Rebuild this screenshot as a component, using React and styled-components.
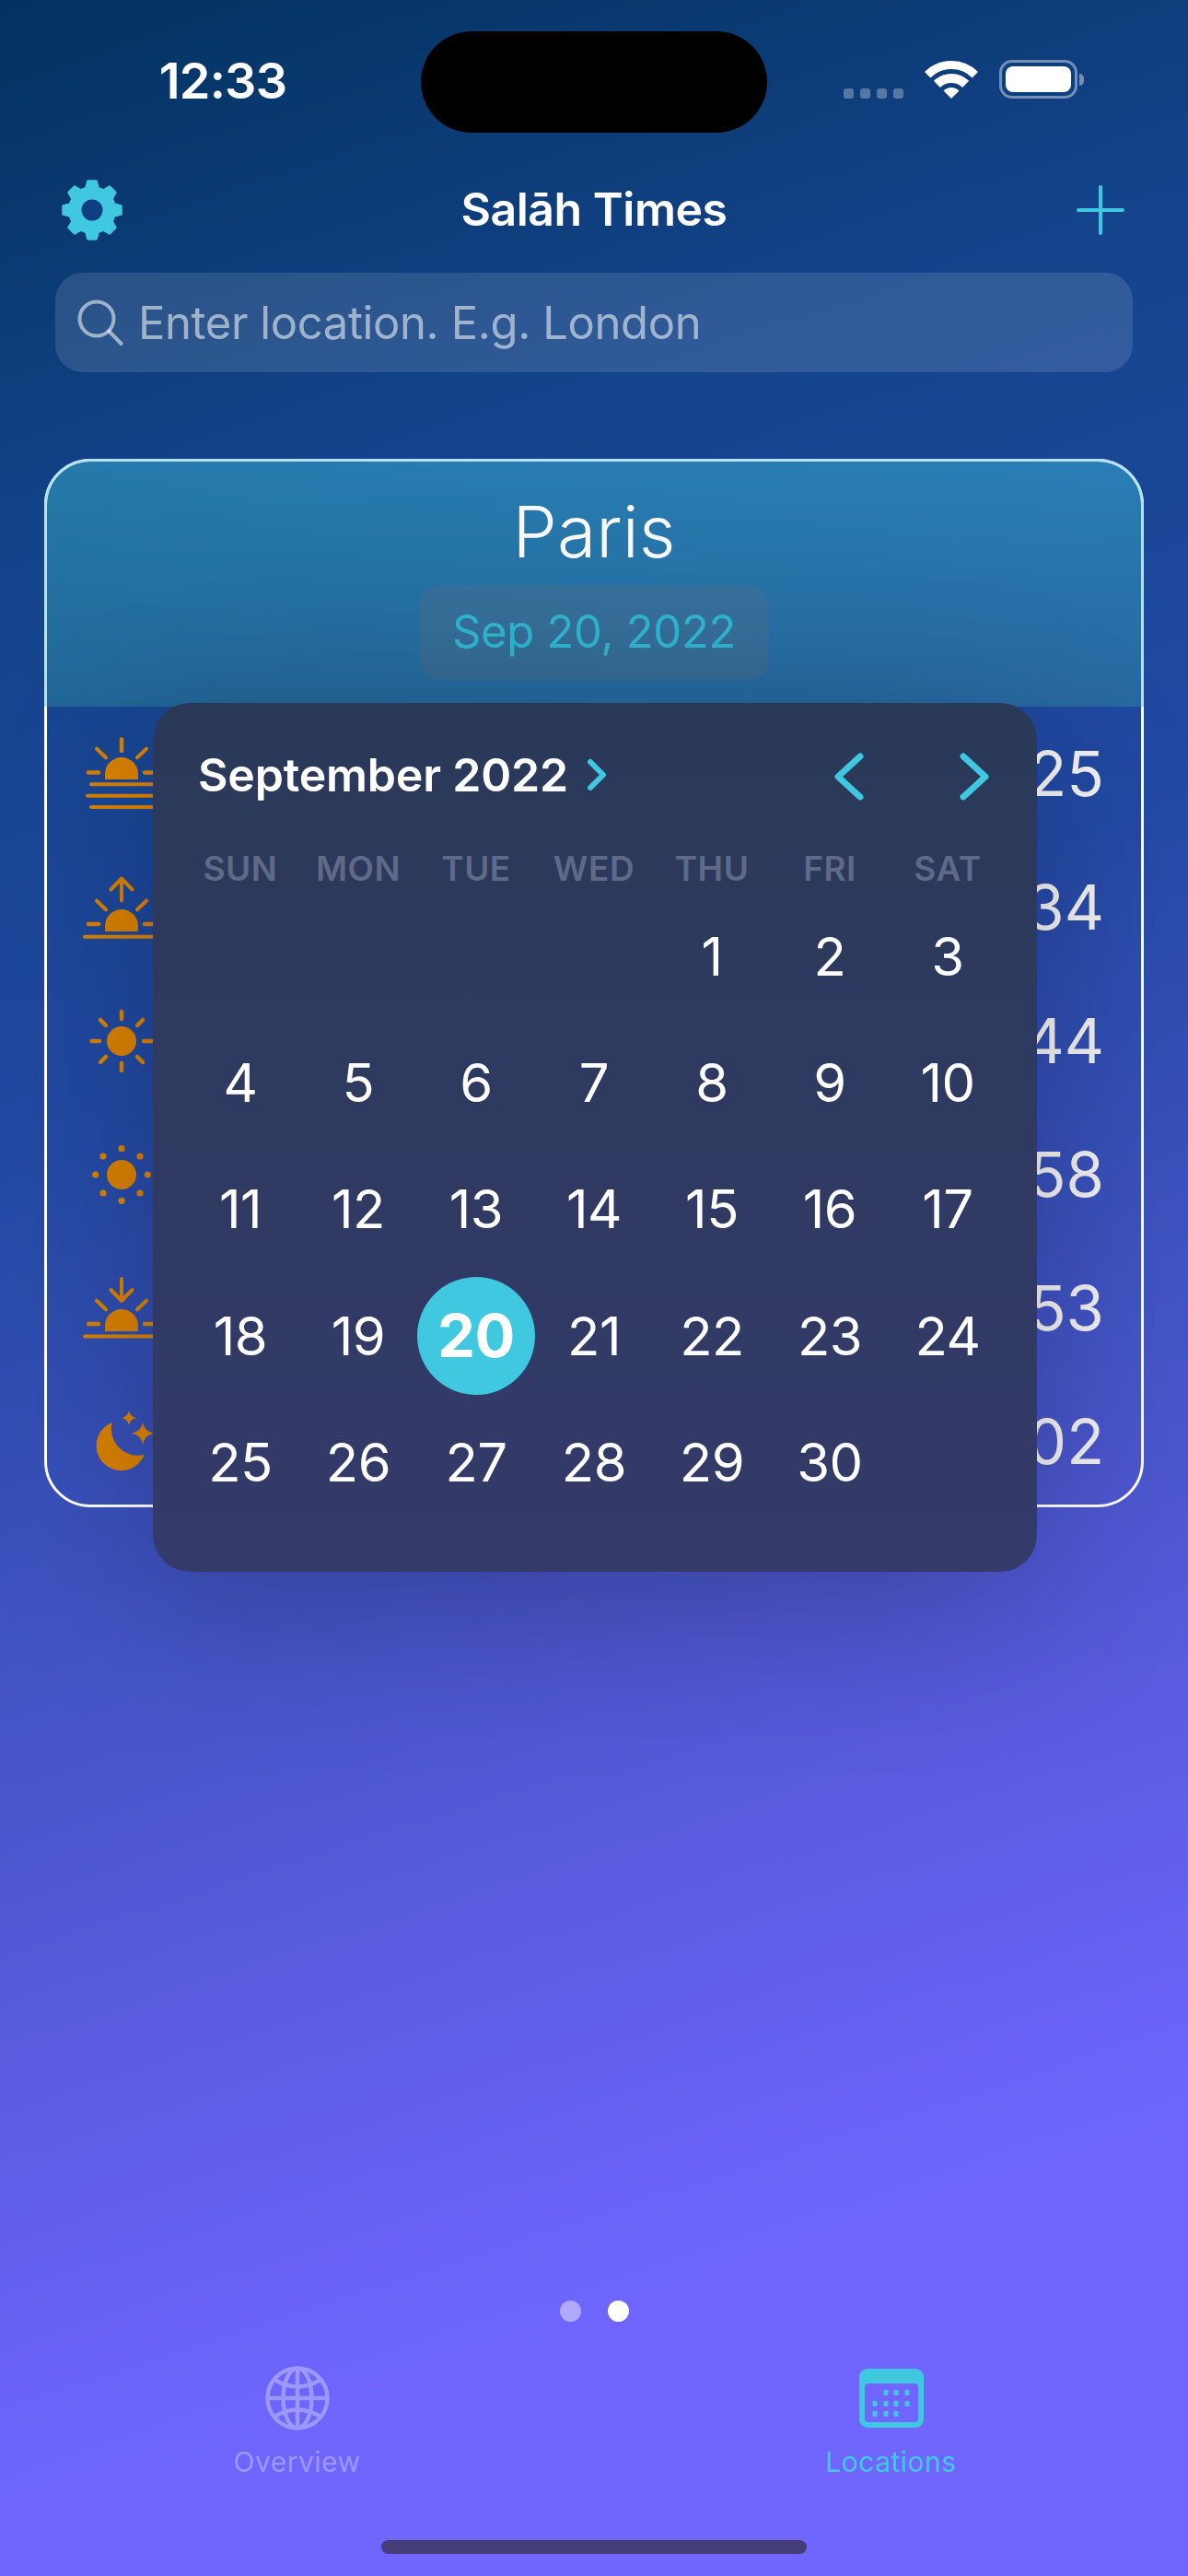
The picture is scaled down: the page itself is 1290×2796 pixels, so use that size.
import React from 'react';
import styled, { createGlobalStyle } from 'styled-components';


// data
const WEEKDAYS = ['SUN', 'MON', 'TUE', 'WED', 'THU', 'FRI', 'SAT'];
const LEADING_BLANKS = 4;
const DAYS_IN_MONTH = 30;
const SELECTED_DAY = 20;
const ORANGE = '#d98200';
const TEAL = '#40c8e0';


// styled-components
const GlobalStyle = createGlobalStyle`
  html, body {
    margin: 0;
    padding: 0;
    background: #14438b;
  }
`

const Page = styled.div`
  width: 1290px;
  height: 2796px;
  overflow: hidden;
  display: flex;
  flex-direction: column;
  font-family: Inter, "Liberation Sans", sans-serif;
  color: #fff;
  background: linear-gradient(162deg, #03325f 0%, #14448c 20%, #2249a3 39%, #4a56cc 61%, #6b63f8 81%, #7066ff 87%);
`

const StatusBar = styled.div`
  height: 110px;
  padding-top: 34px;
  display: grid;
  grid-template-columns: 457px 376px 1fr;
`

const Clock = styled.div`
  align-self: center;
  text-align: center;
  width: 484px;
  font-size: 54px;
  font-weight: 600;
  letter-spacing: -0.8px;
  margin-top: -4px;
`

const Island = styled.div`
  background: #000;
  border-radius: 55px;
`

const StatusIcons = styled.div`
  display: flex;
  align-items: flex-end;
  height: 73px;
  padding-left: 83px;
`

const CellDots = styled.div`
  display: flex;
  gap: 7px;
  margin-right: 23px;
`

const CellDot = styled.span`
  width: 11px;
  height: 11px;
  border-radius: 3px;
  background: rgba(255, 255, 255, 0.3);
`

const Battery = styled.div`
  display: flex;
  align-items: center;
  margin-left: 23px;
  gap: 2px;
`

const BatteryShell = styled.div`
  box-sizing: border-box;
  width: 85px;
  height: 42px;
  padding: 4px;
  border: 3px solid rgba(255, 255, 255, 0.42);
  border-radius: 14px;
`

const BatteryLevel = styled.div`
  height: 100%;
  background: #fff;
  border-radius: 8px;
`

const BatteryNub = styled.div`
  width: 5px;
  height: 13px;
  background: rgba(255, 255, 255, 0.42);
  border-radius: 0 5px 5px 0;
`

const NavRow = styled.div`
  margin-top: 28px;
  height: 112px;
  padding: 0 69px;
  display: grid;
  grid-template-columns: 1fr auto 1fr;
  align-items: center;
  > :last-child {
    justify-self: end;
  }
`

const Title = styled.div`
  font-size: 50px;
  font-weight: 600;
  letter-spacing: -0.5px;
  margin-top: -3px;
`

const SearchBox = styled.div`
  box-sizing: border-box;
  margin: 12px 60px 0 60px;
  height: 108px;
  padding-left: 24px;
  display: flex;
  align-items: center;
  gap: 16px;
  border-radius: 30px;
  background: rgba(255, 255, 255, 0.12);
`

const Placeholder = styled.span`
  font-size: 49px;
  letter-spacing: -0.4px;
  color: rgba(255, 255, 255, 0.55);
`

const Card = styled.div`
  box-sizing: border-box;
  position: relative;
  margin: 94px 48px 0;
  height: 1138px;
  border: 3px solid #fff;
  border-radius: 50px;
`

const CardHeader = styled.div`
  box-sizing: border-box;
  margin: -3px -3px 0;
  height: 269px;
  padding-top: 31px;
  display: flex;
  flex-direction: column;
  align-items: center;
  border: 3px solid #b5e2ee;
  border-bottom: 0;
  border-radius: 50px 50px 0 0;
  background: linear-gradient(180deg, rgba(63, 198, 222, 0.43), rgba(60, 190, 165, 0.27));
  background-clip: padding-box;
`

const CityName = styled.div`
  font-size: 77px;
  line-height: 90px;
  font-weight: 300;
  color: #f6f8fa;
`

const DatePill = styled.div`
  box-sizing: border-box;
  margin-top: 13px;
  padding-bottom: 3px;
  width: 379px;
  height: 103px;
  display: flex;
  align-items: center;
  justify-content: center;
  border-radius: 22px;
  font-size: 49px;
  font-weight: 400;
  letter-spacing: -0.3px;
  color: #2fb4cf;
  background: rgba(120, 110, 110, 0.2);
`

const PrayerList = styled.div`
  display: grid;
  grid-auto-rows: 145px;
`

const PrayerRow = styled.div`
  display: flex;
  align-items: center;
  justify-content: space-between;
  padding: 0 40px 0 39px;
`

const PrayerTime = styled.span`
  font-size: 67px;
  font-weight: 400;
  color: #f2f2f4;
`

const Calendar = styled.div`
  box-sizing: border-box;
  position: absolute;
  left: 115px;
  top: 262px;
  width: 960px;
  height: 943px;
  padding: 48px 31px 0;
  border-radius: 40px;
  background: linear-gradient(180deg, #2a3958, #343a6a);
  box-shadow: 0 40px 180px rgba(0, 0, 0, 0.22);
`

const MonthRow = styled.div`
  height: 60px;
  padding: 0 21px 0 18px;
  display: flex;
  align-items: center;
  justify-content: space-between;
`

const MonthLabel = styled.div`
  display: flex;
  align-items: center;
  gap: 20px;
  font-size: 50px;
  font-weight: 600;
  letter-spacing: -0.2px;
`

const MonthArrows = styled.div`
  display: flex;
  gap: 104px;
  margin-top: 4px;
`

const WeekRow = styled.div`
  margin-top: 48px;
  display: grid;
  grid-template-columns: repeat(7, 128px);
  height: 46px;
`

const WeekDay = styled.div`
  display: flex;
  align-items: center;
  justify-content: center;
  font-size: 37px;
  font-weight: 600;
  letter-spacing: 0.5px;
  color: #5e6a87;
`

const DayGrid = styled.div`
  margin-top: 4px;
  display: grid;
  grid-template-columns: repeat(7, 128px);
  grid-auto-rows: 137.4px;
`

const DayCell = styled.div`
  display: flex;
  align-items: center;
  justify-content: center;
  font-size: ${p => (p.$selected ? '65px' : '58px')};
  font-weight: ${p => (p.$selected ? 700 : 400)};
  letter-spacing: -0.5px;
`

const DayCircle = styled.div`
  width: 128px;
  height: 128px;
  border-radius: 50%;
  display: flex;
  align-items: center;
  justify-content: center;
  background: ${TEAL};
`

const Pager = styled.div`
  margin-top: 861px;
  display: flex;
  justify-content: center;
  gap: 29px;
`

const PagerDot = styled.span`
  width: 23px;
  height: 23px;
  border-radius: 50%;
  background: ${p => (p.$active ? '#fff' : 'rgba(255, 255, 255, 0.45)')};
`

const TabBar = styled.div`
  margin-top: 48px;
  display: grid;
  grid-template-columns: 1fr 1fr;
`

const Tab = styled.div`
  display: flex;
  flex-direction: column;
  align-items: center;
  gap: 16px;
  color: ${p => (p.$active ? TEAL : '#9d98ff')};
`

const TabIcon = styled.div`
  height: 70px;
  display: flex;
  align-items: center;
`

const TabLabel = styled.div`
  font-size: 30px;
  line-height: 36px;
  letter-spacing: 0.5px;
`

const HomeIndicator = styled.div`
  margin: 67px auto 0;
  width: 462px;
  height: 15px;
  border-radius: 8px;
  background: rgba(32, 27, 10, 0.55);
`


// icons
const gearPath = () => {
  const point = (r, deg) => {
    const a = (deg - 90) * Math.PI / 180;
    return `${(35 + r * Math.cos(a)).toFixed(2)} ${(35 + r * Math.sin(a)).toFixed(2)}`;
  };
  let d = '';
  for (let i = 0; i < 8; i++) {
    const c = i * 45;
    d += `${i ? 'L' : 'M'}${point(24.5, c - 22.5)} L${point(24.5, c - 15)} L${point(31.5, c - 8)} L${point(31.5, c + 8)} L${point(24.5, c + 15)} `;
  }
  return d + 'Z';
};

const GearIcon = () => (
  <svg width="70" height="70" viewBox="0 0 70 70" style={{ marginLeft: '-4px' }}>
    <path d={gearPath()} fill={TEAL} stroke={TEAL} strokeWidth="3" strokeLinejoin="round" />
    <circle cx="35" cy="35" r="11.5" fill="#0f3f80" />
  </svg>
);

const PlusIcon = () => (
  <svg width="52" height="54" viewBox="0 0 52 54" fill="none" stroke={TEAL} strokeWidth="4" strokeLinecap="round">
    <path d="M26 2V52M2 27H50" />
  </svg>
);

const SearchIcon = () => (
  <svg width="50" height="50" viewBox="0 0 50 50" fill="none" stroke="rgba(255,255,255,0.55)" strokeWidth="4" strokeLinecap="round">
    <circle cx="21" cy="21" r="18.5" />
    <path d="M34.5 34.5L47.5 48" />
  </svg>
);

const WifiIcon = () => (
  <svg width="58" height="42" viewBox="0 0 58 42" fill="#fff">
    <path d="M3.2 16.2A36.5 36.5 0 0 1 54.8 16.2" fill="none" stroke="#fff" strokeWidth="9" />
    <path d="M13.4 26.4A22 22 0 0 1 44.6 26.4" fill="none" stroke="#fff" strokeWidth="10" />
    <path d="M29 42L20.5 33.5A12 12 0 0 1 37.5 33.5Z" />
  </svg>
);

const ChevronIcon = ({ width, height, strokeWidth, left }) => (
  <svg width={width} height={height} viewBox={`0 0 ${width} ${height}`} fill="none" stroke={TEAL} strokeWidth={strokeWidth} strokeLinecap="round" strokeLinejoin="round">
    {left
      ? <path d={`M${width - 4} 4L4 ${height / 2}L${width - 4} ${height - 4}`} />
      : <path d={`M4 4L${width - 4} ${height / 2}L4 ${height - 4}`} />}
  </svg>
);

const SideRays = () => (
  <path d="M15 14.7L25 24.3M69 14.7L59 24.3" />
);

const SunriseLines = () => (
  <svg width="84" height="84" viewBox="0 0 84 84" fill="none" stroke={ORANGE} strokeWidth="4" strokeLinecap="round">
    <path d="M42 4.5V17" strokeWidth="4.5" />
    <SideRays />
    <path d="M6 40.5H17M67 40.5H78" strokeWidth="4.5" />
    <path d="M24 48V42A18 18 0 0 1 60 42V48Z" fill={ORANGE} stroke="none" />
    <path d="M9 53.2H84M5 65.7H75M9 78H84" />
  </svg>
);

const ArrowSun = ({ down }) => (
  <svg width="84" height="72" viewBox="0 0 84 72" fill="none" stroke={ORANGE} strokeWidth="4" strokeLinecap="round" strokeLinejoin="round">
    {down
      ? <path d="M42 4V28M30.5 16L42 28L53.5 16" />
      : <path d="M42 28.5V4.5M30.5 16.5L42 4.5L53.5 16.5" />}
    <g transform={`translate(0 ${down ? 13 : 14})`}>
      <SideRays />
    </g>
    <path d={down ? 'M6 53H17M67 53H78' : 'M6 54H17M67 54H78'} strokeWidth="4.5" />
    <path d={down ? 'M24 61V55A18 18 0 0 1 60 55V61Z' : 'M24 62V56A18 18 0 0 1 60 56V62Z'} fill={ORANGE} stroke="none" />
    <path d={down ? 'M2 66.5H84' : 'M2 67.7H84'} />
  </svg>
);

const SunRays = () => (
  <svg width="84" height="84" viewBox="0 0 84 84" fill="none" stroke={ORANGE} strokeWidth="4.5" strokeLinecap="round">
    <circle cx="42" cy="42" r="16" fill={ORANGE} stroke="none" />
    <path d="M42 10V18M42 66V74M9.5 42H18M66 42H76" />
    <path d="M19 19L25 25M59 25L65 19M19 65L25 59M59 59L65 65" />
  </svg>
);

const SunDots = () => (
  <svg width="84" height="72" viewBox="0 0 84 72" fill={ORANGE}>
    <circle cx="42" cy="36" r="16" />
    {[[42, 7.7], [22, 16], [62, 16], [13.7, 36], [70.3, 36], [22, 56], [62, 56], [42, 64.3]].map(([cx, cy]) => (
      <circle key={`${cx}-${cy}`} cx={cx} cy={cy} r="3.6" />
    ))}
  </svg>
);

const star = (x, y, r) => {
  const k = r * 0.16;
  return `M${x} ${y - r}Q${x + k} ${y - k} ${x + r} ${y}Q${x + k} ${y + k} ${x} ${y + r}Q${x - k} ${y + k} ${x - r} ${y}Q${x - k} ${y - k} ${x} ${y - r}Z`;
};

const MoonIcon = () => (
  <svg width="84" height="72" viewBox="0 0 84 72" fill={ORANGE}>
    <path d="M31.7 15A27 27 0 1 0 66.7 50A29 29 0 0 1 31.7 15Z" />
    <path d={star(50, 10, 8)} />
    <path d={star(65, 26.7, 12)} />
  </svg>
);

const GlobeIcon = () => (
  <svg width="70" height="70" viewBox="0 0 70 70" fill="none" stroke="#9d98ff" strokeWidth="4.5">
    <circle cx="35" cy="35" r="32.5" />
    <ellipse cx="35" cy="35" rx="15.5" ry="32.5" />
    <path d="M35 2.5V67.5M2.5 35H67.5" />
    <path d="M10 15Q35 30 60 15M10 55Q35 40 60 55" />
  </svg>
);

const CalendarIcon = () => (
  <svg width="70" height="64" viewBox="0 0 70 64" fill={TEAL}>
    <path fillRule="evenodd" d="M9 0H61A9 9 0 0 1 70 9V55A9 9 0 0 1 61 64H9A9 9 0 0 1 0 55V9A9 9 0 0 1 9 0ZM10 16A4 4 0 0 0 6 20V54A4 4 0 0 0 10 58H60A4 4 0 0 0 64 54V20A4 4 0 0 0 60 16Z" />
    {[[29, 23], [40, 23], [52, 23], [17, 35], [29, 35], [40, 35], [52, 35], [17, 46], [29, 46], [40, 46]].map(([x, y]) => (
      <rect key={`${x}-${y}`} x={x - 2.5} y={y} width="5" height="6" rx="1" />
    ))}
  </svg>
);


const PRAYERS = [
  { time: '25', icon: <SunriseLines /> },
  { time: '34', icon: <ArrowSun /> },
  { time: '44', icon: <SunRays /> },
  { time: '58', icon: <SunDots /> },
  { time: '53', icon: <ArrowSun down /> },
  { time: '02', icon: <MoonIcon /> },
];


// components
const CalendarPopover = () => {
  const cells = [
    ...Array.from({ length: LEADING_BLANKS }, () => null),
    ...Array.from({ length: DAYS_IN_MONTH }, (_, i) => i + 1),
  ];
  return (
    <Calendar>
      <MonthRow>
        <MonthLabel>
          September 2022
          <ChevronIcon width={22} height={36} strokeWidth={6} />
        </MonthLabel>
        <MonthArrows>
          <ChevronIcon width={32} height={52} strokeWidth={7} left />
          <ChevronIcon width={32} height={52} strokeWidth={7} />
        </MonthArrows>
      </MonthRow>
      <WeekRow>
        {WEEKDAYS.map(day => <WeekDay key={day}>{day}</WeekDay>)}
      </WeekRow>
      <DayGrid>
        {cells.map((day, i) => (
          <DayCell key={i} $selected={day === SELECTED_DAY}>
            {day === SELECTED_DAY ? <DayCircle>{day}</DayCircle> : day}
          </DayCell>
        ))}
      </DayGrid>
    </Calendar>
  );
}

const App = () => {
  return (
    <Page>
      <GlobalStyle />
      <StatusBar>
        <Clock>12:33</Clock>
        <Island />
        <StatusIcons>
          <CellDots>
            {[0, 1, 2, 3].map(i => <CellDot key={i} />)}
          </CellDots>
          <WifiIcon />
          <Battery>
            <BatteryShell><BatteryLevel /></BatteryShell>
            <BatteryNub />
          </Battery>
        </StatusIcons>
      </StatusBar>

      <NavRow>
        <GearIcon />
        <Title>Salāh Times</Title>
        <PlusIcon />
      </NavRow>

      <SearchBox>
        <SearchIcon />
        <Placeholder>Enter location. E.g. London</Placeholder>
      </SearchBox>

      <Card>
        <CardHeader>
          <CityName>Paris</CityName>
          <DatePill>Sep 20, 2022</DatePill>
        </CardHeader>
        <PrayerList>
          {PRAYERS.map(p => (
            <PrayerRow key={p.time}>
              {p.icon}
              <PrayerTime>{p.time}</PrayerTime>
            </PrayerRow>
          ))}
        </PrayerList>
        <CalendarPopover />
      </Card>

      <Pager>
        <PagerDot />
        <PagerDot $active />
      </Pager>

      <TabBar>
        <Tab>
          <TabIcon><GlobeIcon /></TabIcon>
          <TabLabel>Overview</TabLabel>
        </Tab>
        <Tab $active>
          <TabIcon><CalendarIcon /></TabIcon>
          <TabLabel>Locations</TabLabel>
        </Tab>
      </TabBar>

      <HomeIndicator />
    </Page>
  );
}


export default App;
